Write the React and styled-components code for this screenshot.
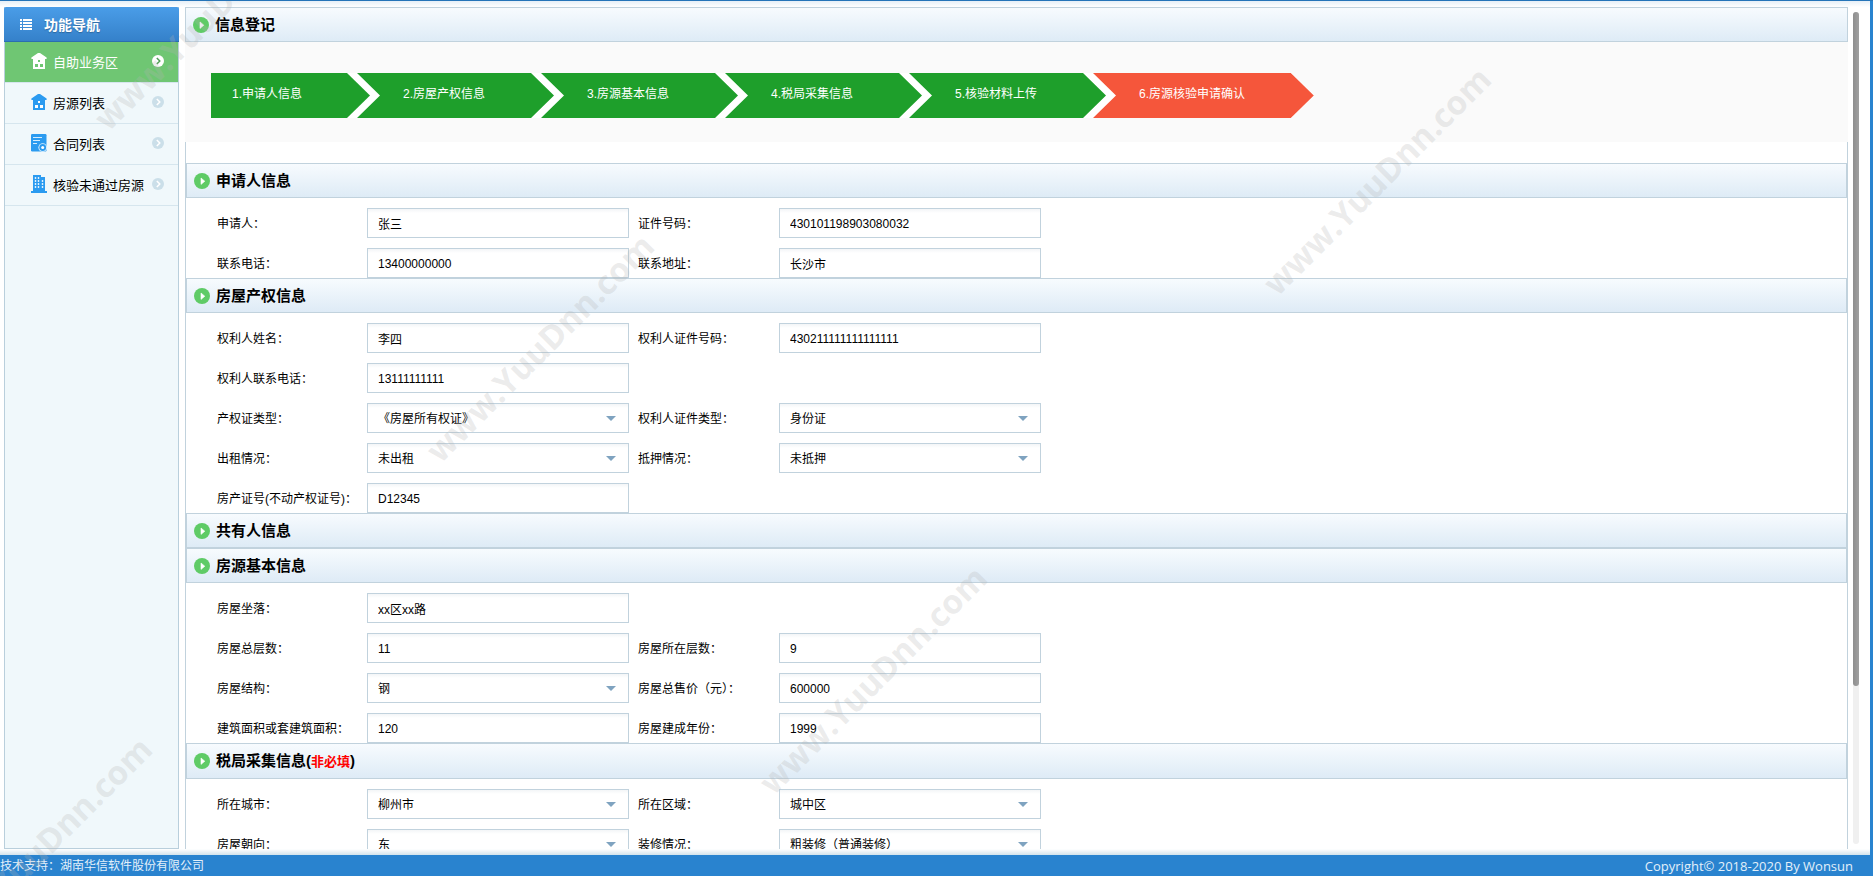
import React from "react";
import styled, { createGlobalStyle, css } from "styled-components";

const GlobalStyle = createGlobalStyle`
  :root {
    --font-primary: "Liberation Sans", "Noto Sans CJK SC", sans-serif;
    --font-footer: "Open Sans", "Noto Sans CJK SC", sans-serif;
    --color-line: #c1d2dd;
    --color-brand: #2983cf;
    --color-done: #1e9f2b;
    --color-current: #f5563b;
  }

  * {
    box-sizing: border-box;
  }

  body {
    margin: 0;
    font-family: var(--font-primary);
    font-size: 12px;
    color: #000;
  }

  h1, h2, ol, ul {
    margin: 0;
    padding: 0;
    list-style: none;
  }
`;

const Page = styled.div`
  position: relative;
  display: flex;
  flex-direction: column;
  height: 100vh;
  overflow: hidden;
  border-top: 1px solid #2574b8;
`;

const Body = styled.div`
  flex: 1;
  min-height: 0;
  display: flex;
  padding: 6px 11px 6px 4px;
  border-right: 3px solid var(--color-brand);
  background: linear-gradient(#e6eff7, #fff) top / 100% 6px no-repeat,
    linear-gradient(#fff, #d3e3ec) bottom / 100% 6px no-repeat, #fff;
`;

const Sidebar = styled.nav`
  flex: none;
  width: 175px;
  border: 1px solid #b9cfdc;
  border-top: 0;
  background: #f0f8fb;
`;

const NavTitle = styled.h2`
  display: flex;
  align-items: center;
  gap: 12px;
  height: 35px;
  margin: 0 -1px;
  padding: 2px 16px 0;
  border-bottom: 1px solid #2b6fb0;
  border-radius: 2px 2px 0 0;
  background: linear-gradient(#4a9de8, #3581ca);
  color: #fff;
  font-size: 14px;
  line-height: 20px;
  text-shadow: 0 1px 1px rgba(0, 0, 0, 0.25);
`;

const NavLink = styled.a`
  display: flex;
  align-items: center;
  height: 41px;
  padding: 0 14px 2px 26px;
  border-bottom: 1px solid #d6e6ee;
  color: ${(props) => (props.$active ? "#fff" : "#000")};
  background: ${(props) => (props.$active ? "#6fc673" : "transparent")};
  font-size: 13px;
  text-decoration: none;
  white-space: nowrap;

  & > span {
    flex: 1;
    margin-left: 6px;
  }
`;

const Main = styled.main`
  flex: 1;
  min-width: 0;
  margin: 0 5px 0 6px;
  overflow-y: auto;
  scrollbar-width: none;
`;

const headingBar = css`
  display: flex;
  align-items: center;
  gap: 6px;
  height: 35px;
  padding: 0 7px;
  border: 1px solid var(--color-line);
  background: linear-gradient(#f7fbfe, #deebf6);
  font-size: 15px;
  line-height: 20px;
`;

const PageTitle = styled.h1`
  ${headingBar}
`;

const SectionTitle = styled.h2`
  ${headingBar}
  height: ${(props) => (props.$noted ? 36 : 35)}px;

  & em {
    color: #f00;
    font-size: 13px;
    font-style: normal;
  }
`;

const StepArea = styled.div`
  padding: 31px 26px 24px;
  background: #fafafa;
`;

const Steps = styled.ol`
  display: flex;
  width: max-content;
  background: #fff;
  clip-path: polygon(
    0 0,
    calc(100% - 23px) 0,
    100% 50%,
    calc(100% - 23px) 100%,
    0 100%
  );
`;

const Step = styled.li`
  width: 197px;
  height: 45px;
  margin-right: -13px;
  padding: 0 0 3px 46px;
  color: #fff;
  line-height: 42px;
  white-space: nowrap;
  background: var(--color-done);
  clip-path: polygon(
    0 0,
    calc(100% - 23px) 0,
    100% 50%,
    calc(100% - 23px) 100%,
    0 100%,
    23px 50%
  );

  &:first-child {
    width: 159px;
    padding-left: 21px;
    clip-path: polygon(
      0 0,
      calc(100% - 23px) 0,
      100% 50%,
      calc(100% - 23px) 100%,
      0 100%
    );
  }

  &:last-child {
    width: 221px;
    margin-right: 0;
    background: var(--color-current);
  }
`;

const Panel = styled.form`
  padding-top: 21px;
  border: solid var(--color-line);
  border-width: 0 1px;
`;

const Fields = styled.div`
  display: grid;
  grid-template-columns: 150px 262px 150px 262px;
  row-gap: 10px;
  padding: 10px 31px 0;
`;

const Label = styled.label`
  display: flex;
  align-items: center;
  height: 30px;
  padding-bottom: 2px;
  padding-left: ${(props) => (props.$second ? 9 : 0)}px;
  white-space: nowrap;
`;

const Cell = styled.div`
  position: relative;
  height: 30px;
  grid-column-end: ${(props) => (props.$alone ? "span 3" : "auto")};
  width: 262px;
`;

const control = css`
  width: 100%;
  height: 30px;
  margin: 0;
  padding: 1px 10px 0;
  border: 1px solid var(--color-line);
  border-radius: 0;
  outline: none;
  background: linear-gradient(#f3f5f7, #fff) top / 100% 4px no-repeat, #fff;
  color: #000;
  font-family: inherit;
  font-size: 12px;
`;

const TextInput = styled.input`
  ${control}
`;

const Select = styled.select`
  ${control}
  appearance: none;
`;

const SelectCell = styled(Cell)`
  &:after {
    content: "";
    position: absolute;
    top: 13px;
    right: 13px;
    border: solid transparent;
    border-width: 5px 5px 0;
    border-top-color: #7fa3c0;
    pointer-events: none;
  }
`;

const ScrollTrack = styled.div`
  flex: none;
  width: 6px;
  margin: 5px 0;
  border-radius: 3px;
  background: #f0f0f0;
`;

const ScrollThumb = styled.div`
  height: 81%;
  border-radius: 3px;
  background: linear-gradient(90deg, #8f8f8f, #a0a0a0);
`;

const Footer = styled.footer`
  flex: none;
  display: flex;
  align-items: center;
  justify-content: space-between;
  height: 21px;
  padding-right: 20px;
  background: var(--color-brand);
  color: #e3f0fa;
  font-family: var(--font-footer);
  line-height: 20px;
`;

const Copyright = styled.span`
  font-size: 13px;
`;

const Watermarks = styled.div`
  position: absolute;
  inset: 0;
  overflow: hidden;
  pointer-events: none;
`;

const Mark = styled.span`
  position: absolute;
  left: ${(props) => props.$x}px;
  top: ${(props) => props.$y}px;
  transform: translate(-50%, -50%) rotate(-45deg);
  color: rgba(180, 180, 180, 0.27);
  font-family: "Open Sans", sans-serif;
  font-size: 33px;
  font-weight: bold;
  line-height: 40px;
`;

const ListIcon = () => (
  <svg width="12" height="12" viewBox="0 0 12 12" fill="#fff">
    {[0, 3, 6, 9].map((y) => (
      <g key={y}>
        <rect x="0" y={y} width="2" height="2" />
        <rect x="3" y={y} width="9" height="2" />
      </g>
    ))}
  </svg>
);

const PlayIcon = () => (
  <svg width="16" height="16" viewBox="0 0 16 16">
    <circle cx="8" cy="8" r="8" fill="#5fcb66" />
    <path d="M7 5v6.4L10.8 8.2z" fill="#fff" stroke="#fff" strokeWidth=".6" />
  </svg>
);

const MoreIcon = ({ active }) => (
  <svg width="12" height="12" viewBox="0 0 12 12">
    <circle cx="6" cy="6" r="6" fill={active ? "#fff" : "#cbdfe9"} />
    <path
      d="M4.8 3l3 3-3 3"
      fill="none"
      stroke={active ? "#4f9f57" : "#fff"}
      strokeWidth="1.5"
    />
  </svg>
);

const HouseIcon = ({ color, hole }) => (
  <svg width="16" height="16" viewBox="0 0 16 16">
    <path d="M7 0h2l6.6 4.4V6H14v10H2V6H.4V4.4z" fill={color} />
    <g fill={hole}>
      <rect x="7" y="7" width="2" height="2" />
      <rect x="4" y="11" width="3" height="3" />
      <rect x="9" y="11" width="3" height="3" />
    </g>
  </svg>
);

const ContractIcon = () => (
  <svg width="16" height="18" viewBox="0 0 16 18">
    <rect width="15.5" height="17.5" rx="1.2" fill="#2b9bf0" />
    <path
      d="M2 3.5h9M2 6.5h7M2 9.5h4"
      stroke="#d5ecfd"
      strokeWidth="1.1"
      fill="none"
    />
    <circle cx="11.7" cy="13.5" r="4.3" fill="#e4f3fd" />
    <circle cx="11.7" cy="13.5" r="3.4" fill="#2b9bf0" />
    <circle cx="11.7" cy="13.5" r="1.5" fill="#fff" />
  </svg>
);

const BuildingIcon = () => (
  <svg width="16" height="18" viewBox="0 0 16 18">
    <path d="M2 0h8v2h4v14h2v2H0v-2h2z" fill="#2b9bf0" />
    <g fill="none" stroke="#dff0fd" strokeWidth="1.4" strokeDasharray="2 1">
      <path d="M4.5 2v12" />
      <path d="M7.5 2v12" />
      <path d="M11.5 5v9" />
    </g>
  </svg>
);

const navItems = [
  {
    text: "自助业务区",
    icon: <HouseIcon color="#fff" hole="#6fc673" />,
    active: true,
  },
  { text: "房源列表", icon: <HouseIcon color="#2b9bf0" hole="#fff" /> },
  { text: "合同列表", icon: <ContractIcon /> },
  { text: "核验未通过房源", icon: <BuildingIcon /> },
];

const steps = [
  "1.申请人信息",
  "2.房屋产权信息",
  "3.房源基本信息",
  "4.税局采集信息",
  "5.核验材料上传",
  "6.房源核验申请确认",
];

// each row holds up to two fields
const sections = [
  {
    title: "申请人信息",
    rows: [
      [
        { label: "申请人：", value: "张三" },
        { label: "证件号码：", value: "430101198903080032" },
      ],
      [
        { label: "联系电话：", value: "13400000000" },
        { label: "联系地址：", value: "长沙市" },
      ],
    ],
  },
  {
    title: "房屋产权信息",
    rows: [
      [
        { label: "权利人姓名：", value: "李四" },
        { label: "权利人证件号码：", value: "430211111111111111" },
      ],
      [{ label: "权利人联系电话：", value: "13111111111" }],
      [
        { label: "产权证类型：", value: "《房屋所有权证》", select: true },
        { label: "权利人证件类型：", value: "身份证", select: true },
      ],
      [
        { label: "出租情况：", value: "未出租", select: true },
        { label: "抵押情况：", value: "未抵押", select: true },
      ],
      [{ label: "房产证号(不动产权证号)：", value: "D12345" }],
    ],
  },
  { title: "共有人信息", rows: [] },
  {
    title: "房源基本信息",
    rows: [
      [{ label: "房屋坐落：", value: "xx区xx路" }],
      [
        { label: "房屋总层数：", value: "11" },
        { label: "房屋所在层数：", value: "9" },
      ],
      [
        { label: "房屋结构：", value: "钢", select: true },
        { label: "房屋总售价（元）：", value: "600000" },
      ],
      [
        { label: "建筑面积或套建筑面积：", value: "120" },
        { label: "房屋建成年份：", value: "1999" },
      ],
    ],
  },
  {
    title: "税局采集信息",
    note: "非必填",
    rows: [
      [
        { label: "所在城市：", value: "柳州市", select: true },
        { label: "所在区域：", value: "城中区", select: true },
      ],
      [
        { label: "房屋朝向：", value: "东", select: true },
        { label: "装修情况：", value: "粗装修（普通装修）", select: true },
      ],
    ],
  },
];

const marks = [
  [208, 15],
  [540, 347],
  [1377, 180],
  [873, 679],
  [38, 850],
];

const Field = ({ id, second, alone, label, value, select }) => (
  <>
    <Label htmlFor={id} $second={second}>
      {label}
    </Label>
    {select ? (
      <SelectCell $alone={alone}>
        <Select id={id} defaultValue={value}>
          <option>{value}</option>
        </Select>
      </SelectCell>
    ) : (
      <Cell $alone={alone}>
        <TextInput id={id} type="text" defaultValue={value} />
      </Cell>
    )}
  </>
);

const Section = ({ index, title, note, rows }) => (
  <section>
    <SectionTitle $noted={Boolean(note)}>
      <PlayIcon />
      <span>
        {title}
        {note && (
          <>
            (<em>{note}</em>)
          </>
        )}
      </span>
    </SectionTitle>
    {rows.length > 0 && (
      <Fields>
        {rows.map((row, r) =>
          row.map((field, c) => (
            <Field
              key={field.label}
              id={`field-${index}-${r}-${c}`}
              second={c === 1}
              alone={row.length === 1}
              {...field}
            />
          ))
        )}
      </Fields>
    )}
  </section>
);

const App = () => {
  return (
    <Page>
      <GlobalStyle />
      <Body>
        <Sidebar>
          <NavTitle>
            <ListIcon />
            功能导航
          </NavTitle>
          <ul>
            {navItems.map((item) => (
              <li key={item.text}>
                <NavLink href="#" $active={item.active}>
                  {item.icon}
                  <span>{item.text}</span>
                  <MoreIcon active={item.active} />
                </NavLink>
              </li>
            ))}
          </ul>
        </Sidebar>
        <Main>
          <PageTitle>
            <PlayIcon />
            信息登记
          </PageTitle>
          <StepArea>
            <Steps>
              {steps.map((step) => (
                <Step key={step}>{step}</Step>
              ))}
            </Steps>
          </StepArea>
          <Panel>
            {sections.map((section, i) => (
              <Section key={section.title} index={i} {...section} />
            ))}
          </Panel>
        </Main>
        <ScrollTrack>
          <ScrollThumb />
        </ScrollTrack>
      </Body>
      <Footer>
        <span>技术支持：湖南华信软件股份有限公司</span>
        <Copyright>Copyright© 2018-2020 By Wonsun</Copyright>
      </Footer>
      <Watermarks aria-hidden="true">
        {marks.map(([x, y]) => (
          <Mark key={x} $x={x} $y={y}>
            www.YuuDnn.com
          </Mark>
        ))}
      </Watermarks>
    </Page>
  );
};

export default App;
